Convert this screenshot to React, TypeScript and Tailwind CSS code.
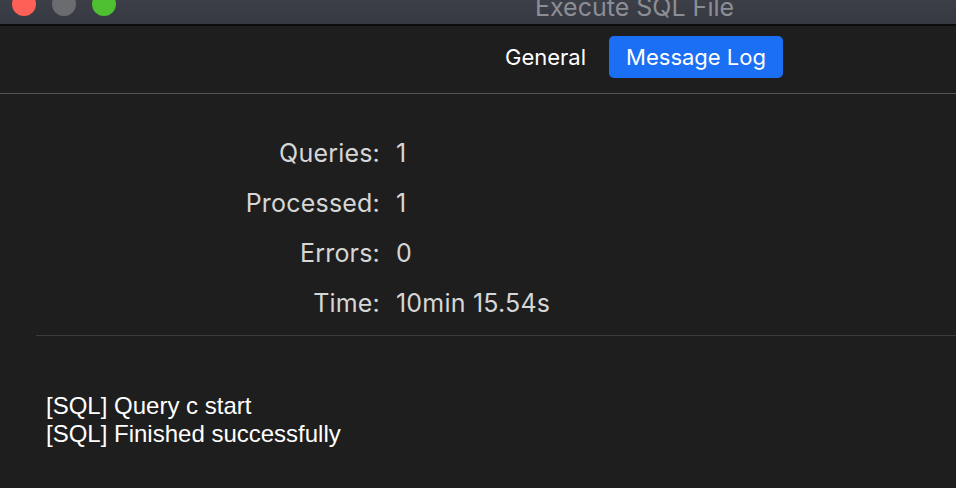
const STATS = [
  { label: 'Queries:', value: '1' },
  { label: 'Processed:', value: '1' },
  { label: 'Errors:', value: '0' },
  { label: 'Time:', value: '10min 15.54s' },
]

const LOG = ['[SQL] Query c start', '[SQL] Finished successfully']

export default function App() {
  return (
    <div className="flex h-[488px] w-[956px] flex-col overflow-hidden bg-[#1e1e1e] font-['Inter',sans-serif]">
      {/* title bar */}
      <div className="flex h-[26px] shrink-0 items-start overflow-hidden border-b-2 border-[#0b0b0c] bg-gradient-to-b from-[#3c3f47] to-[#363941]">
        <div className="-mt-2 flex gap-4 pl-3">
          <span className="h-6 w-6 rounded-full bg-[#fe5f57]" />
          <span className="h-6 w-6 rounded-full bg-[#6b6c70]" />
          <span className="h-6 w-6 rounded-full bg-[#4dbf30]" />
        </div>
        <div className="-mt-[10px] ml-[419px] text-[25px] leading-[34px] text-[#8c8e95]">Execute SQL File</div>
      </div>

      {/* tabs */}
      <div className="flex h-[68px] shrink-0 items-start border-b border-[#545454] pt-[10px] pl-[505px]">
        <button type="button" className="h-[42px] text-[22px] text-white">
          General
        </button>
        <button
          type="button"
          className="ml-[23px] h-[42px] w-[174px] rounded-[5px] bg-[#1b6ff5] text-[22px] text-white"
        >
          Message Log
        </button>
      </div>

      {/* summary */}
      <div className="flex flex-col gap-[20px] pt-[44px] pb-[17px]">
        {STATS.map((s) => (
          <div key={s.label} className="flex text-[25px] leading-[30px] tracking-[0.2px] text-[#d6d6d6]">
            <span className="w-[380px] text-right">{s.label}</span>
            <span className="pl-[16px]">{s.value}</span>
          </div>
        ))}
      </div>
      <div className="ml-9 border-t border-[#3c3c3c]" />

      {/* log */}
      <div className="pt-[56px] pl-[46px] font-['Liberation_Sans',Arial,sans-serif] text-[24px] leading-[28px] text-white">
        {LOG.map((line) => (
          <div key={line}>{line}</div>
        ))}
      </div>
    </div>
  )
}
